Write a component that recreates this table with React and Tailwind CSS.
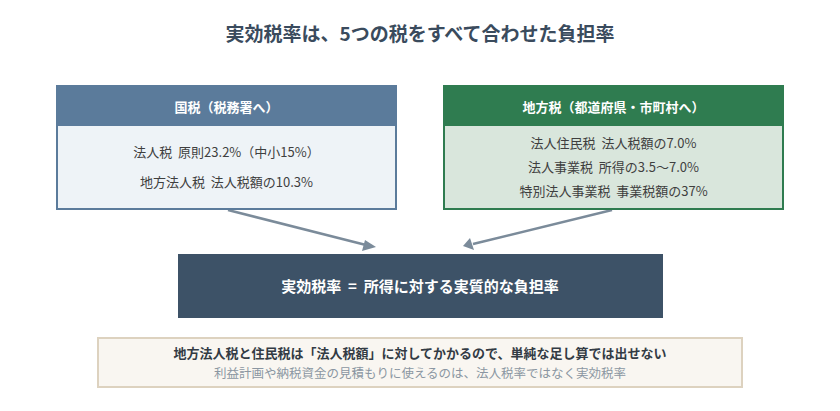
const FONT = { fontFamily: '"Noto Sans CJK JP", "Noto Sans", sans-serif' }

function TaxBox({ title, head, body, border, lines, gap }) {
  return (
    <div className={`w-[341px] h-[125px] flex flex-col border-2 ${border}`}>
      <div className={`h-[39px] flex items-center justify-center text-white text-[13px] font-bold ${head}`}>
        {title}
      </div>
      <div className={`flex-1 flex flex-col items-center justify-center ${gap} ${body} text-[13px] text-[#3f3f3f]`}>
        {lines.map((l) => (
          <p key={l} className="leading-5 whitespace-pre">{l}</p>
        ))}
      </div>
    </div>
  )
}

function Arrows() {
  return (
    <svg width="840" height="44" viewBox="0 0 840 44" className="block">
      <g stroke="#7b8b9a" strokeWidth="2.5" fill="none">
        <line x1="228" y1="0" x2="366" y2="35" />
        <line x1="612" y1="0" x2="473" y2="34" />
      </g>
      <polygon points="376,37 362,41 365,30" fill="#7b8b9a" />
      <polygon points="463,36 470,28 474,40" fill="#7b8b9a" />
    </svg>
  )
}

export default function App() {
  return (
    <div className="w-[840px] h-[411px] bg-white flex flex-col items-center" style={FONT}>
      <h1 className="mt-[21px] text-[19px] leading-6 font-bold text-[#3a4b5d]">
        実効税率は、5つの税をすべて合わせた負担率
      </h1>

      <div className="mt-[40px] flex gap-[46px]">
        <TaxBox
          title="国税（税務署へ）"
          head="bg-[#5b7b9b]"
          body="bg-[#eef3f7]"
          border="border-[#5b7b9b]"
          gap="gap-[10px]"
          lines={['法人税  原則23.2%（中小15%）', '地方法人税  法人税額の10.3%']}
        />
        <TaxBox
          title="地方税（都道府県・市町村へ）"
          head="bg-[#2f7c50]"
          body="bg-[#d9e6dc]"
          border="border-[#2f7c50]"
          gap="gap-[4px]"
          lines={['法人住民税  法人税額の7.0%', '法人事業税  所得の3.5〜7.0%', '特別法人事業税  事業税額の37%']}
        />
      </div>

      <Arrows />

      <div className="w-[485px] h-[64px] bg-[#3d5267] flex items-center justify-center text-white text-[15px] font-bold whitespace-pre">
        {'実効税率  =  所得に対する実質的な負担率'}
      </div>

      <div className="mt-[19px] w-[646px] h-[51px] bg-[#f9f6f1] border-2 border-[#ddd2bf] flex flex-col items-center justify-center">
        <p className="text-[13px] leading-5 font-bold text-[#333b44]">
          地方法人税と住民税は「法人税額」に対してかかるので、単純な足し算では出せない
        </p>
        <p className="text-[12.5px] leading-5 text-[#8b96a2]">
          利益計画や納税資金の見積もりに使えるのは、法人税率ではなく実効税率
        </p>
      </div>
    </div>
  )
}
